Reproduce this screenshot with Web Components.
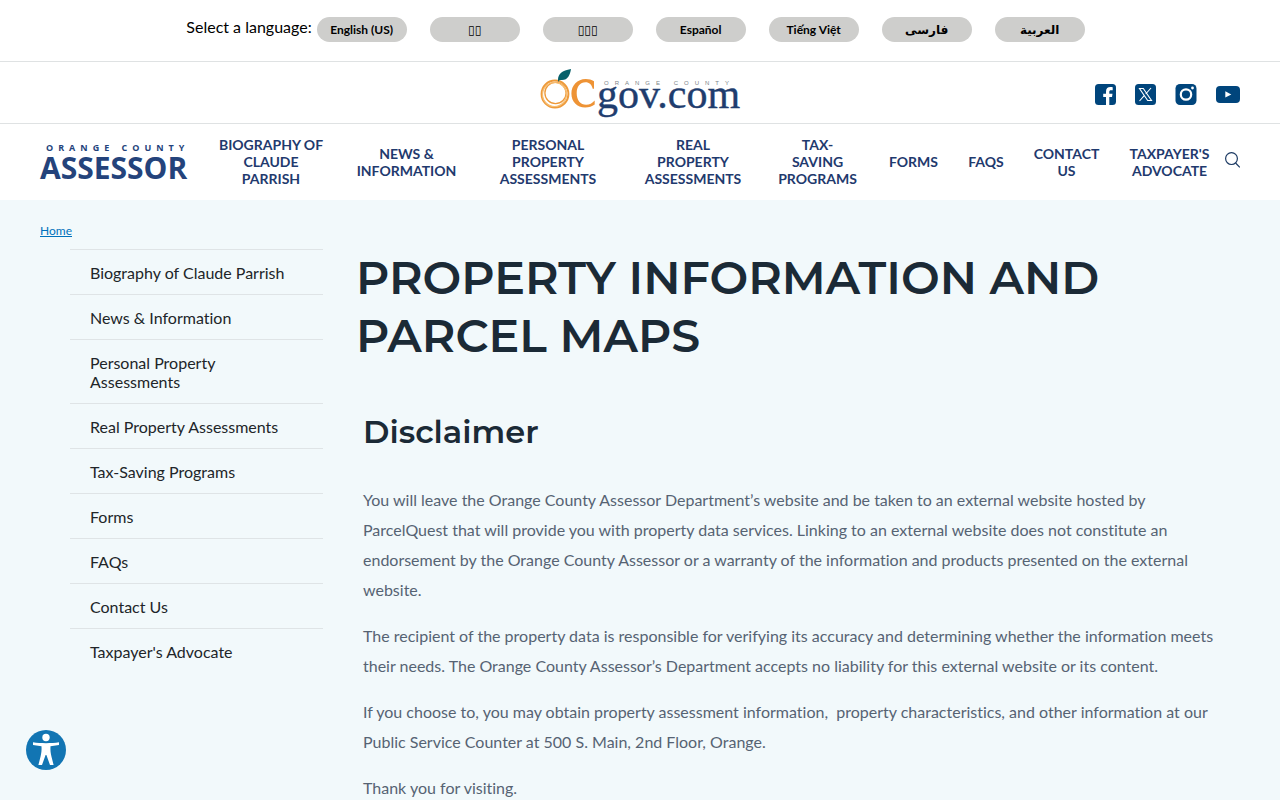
<!DOCTYPE html>
<html lang="en">
<head>
<meta charset="utf-8">
<meta name="viewport" content="width=device-width, initial-scale=1">
<title>Property Information and Parcel Maps</title>
<style>
    body {
        margin: 0;
        background: #f2f9fb;
        color: #212529;
        font-family: Lato, "Noto Sans", "DejaVu Sans", sans-serif;
        font-size: 16px;
        font-variant-ligatures: none;
    }
</style>
</head>
<body>
<oc-page>
    <language-bar slot="header" label="Select a language:">
        <language-button>English (US)</language-button>
        <language-button>▯▯</language-button>
        <language-button>▯▯▯</language-button>
        <language-button>Español</language-button>
        <language-button>Tiếng Việt</language-button>
        <language-button>فارسی</language-button>
        <language-button>العربية</language-button>
    </language-bar>
    <brand-bar slot="header"></brand-bar>
    <main-nav slot="header">
        <nav-item>Biography of Claude Parrish</nav-item>
        <nav-item>News &amp; Information</nav-item>
        <nav-item>Personal Property Assessments</nav-item>
        <nav-item>Real Property Assessments</nav-item>
        <nav-item>Tax-<br>Saving Programs</nav-item>
        <nav-item>Forms</nav-item>
        <nav-item>FAQs</nav-item>
        <nav-item>Contact Us</nav-item>
        <nav-item>Taxpayer's Advocate</nav-item>
    </main-nav>
    <bread-crumb slot="crumb">Home</bread-crumb>
    <side-menu slot="side">
        <side-item>Biography of Claude Parrish</side-item>
        <side-item>News &amp; Information</side-item>
        <side-item>Personal Property Assessments</side-item>
        <side-item>Real Property Assessments</side-item>
        <side-item>Tax-Saving Programs</side-item>
        <side-item>Forms</side-item>
        <side-item>FAQs</side-item>
        <side-item>Contact Us</side-item>
        <side-item>Taxpayer's Advocate</side-item>
    </side-menu>
    <page-article heading="PROPERTY INFORMATION AND PARCEL MAPS" subheading="Disclaimer">
        <p>You will leave the Orange County Assessor Department’s website and be taken to an external website hosted by ParcelQuest that will provide you with property data services. Linking to an external website does not constitute an endorsement by the Orange County Assessor or a warranty of the information and products presented on the external website.</p>
        <p>The recipient of the property data is responsible for verifying its accuracy and determining whether the information meets their needs. The Orange County Assessor’s Department accepts no liability for this external website or its content.</p>
        <p>If you choose to, you may obtain property assessment information,&nbsp; property characteristics, and other information at our Public Service Counter at 500 S. Main, 2nd Floor, Orange.</p>
        <p>Thank you for visiting.</p>
    </page-article>
</oc-page>
<access-button></access-button>

<script>
    class OcPage extends HTMLElement {
        constructor() {
            super()
            this.attachShadow({mode: "open"}).innerHTML = /* html */`
                <style>
                    :host { display: block; }
                    header { background: #fff; }
                    .content { padding: 22px 40px 0; }
                    .columns {
                        display: grid;
                        grid-template-columns: 253px 1fr;
                        gap: 33px;
                        padding: 9px 16px 0 30px;
                    }
                </style>
                <header><slot name="header"></slot></header>
                <div class="content">
                    <slot name="crumb"></slot>
                    <div class="columns">
                        <slot name="side"></slot>
                        <main><slot></slot></main>
                    </div>
                </div>
            `
        }
    }

    class LanguageBar extends HTMLElement {
        constructor() {
            super()
            const label = this.getAttribute("label")
            this.attachShadow({mode: "open"}).innerHTML = /* html */`
                <style>
                    :host {
                        display: flex;
                        justify-content: center;
                        align-items: flex-start;
                        box-sizing: border-box;
                        height: 62px;
                        padding: 17px 9px 0 0;
                        border-bottom: 1px solid #dfe2e3;
                        color: #000;
                    }
                    span { line-height: 20px; margin-right: 5px; }
                    div { display: flex; gap: 23px; }
                </style>
                <span>${label}</span>
                <div role="group" aria-label="${label}"><slot></slot></div>
            `
        }
    }

    class LanguageButton extends HTMLElement {
        constructor() {
            super()
            this.attachShadow({mode: "open"}).innerHTML = /* html */`
                <style>
                    :host { display: block; }
                    button {
                        width: 90px;
                        height: 25px;
                        padding: 0;
                        border: 0;
                        border-radius: 13px;
                        background: #cececc;
                        color: #000;
                        font: bold 12px Lato, "DejaVu Sans", sans-serif;
                        cursor: pointer;
                    }
                </style>
                <button type="button"><slot></slot></button>
            `
        }
    }

    class BrandBar extends HTMLElement {
        constructor() {
            super()
            this.attachShadow({mode: "open"}).innerHTML = /* html */`
                <style>
                    :host {
                        display: grid;
                        grid-template-columns: 1fr auto 1fr;
                        align-items: center;
                        box-sizing: border-box;
                        height: 62px;
                        padding: 0 40px;
                        border-bottom: 1px solid #dfe2e3;
                    }
                    .logo { grid-column: 2; }
                    a, svg { display: block; }
                    .logo svg { overflow: visible; }
                    nav {
                        display: flex;
                        justify-content: flex-end;
                        align-items: center;
                        gap: 19px;
                        padding-top: 4px;
                    }
                </style>
                <a class="logo" href="#" aria-label="OCgov.com">
                    <svg width="200" height="50" viewBox="0 0 200 50">
                        <g fill="none" stroke="#ee9a3a">
                            <circle cx="15" cy="26" r="13.4" stroke-width="2"/>
                            <circle cx="15.500" cy="25" r="10.600" stroke-width="1.300"/>
                            <circle cx="14.500" cy="26.500" r="12" stroke-width="1.200" stroke="#f6bd72"/>
                        </g>
                        <path d="M18 12c0-6 4-9.500 13-11-1 6-3 11-9 11-2 0-3 0-4 2z" fill="#07606a"/>
                        <path d="M54 15.500v5.200h-1.300c-1-4.300-3.400-6.500-7.200-6.500-5.400 0-8.800 4.200-8.800 11 0 7 3.800 11.500 9.400 11.500 3.400 0 6.200-1.600 8.600-4.300v4.100c-2.700 2-5.700 3-9.500 3-8.200 0-13.800-5.700-13.800-13.900S37.200 11 45.700 11c3.300 0 5.800.8 8.300 2.200z" fill="#ee9335"/>
                        <text x="64" y="17" fill="#7e8588" font-family="Liberation Sans, sans-serif" font-size="6" letter-spacing="6">ORANGE COUNTY</text>
                        <text x="57" y="40" fill="#1f3d6e" stroke="#1f3d6e" stroke-width=".4" font-family="Liberation Serif, serif" font-size="42">gov.com</text>
                    </svg>
                </a>
                <nav aria-label="Social media">
                    <a href="#" aria-label="Facebook">
                        <svg width="21" height="21" viewBox="0 0 21 21"><rect width="21" height="21" rx="3.500" fill="#00457c"/><path d="M11 21v-8H8.200v-3.300H11V7.400c0-2.900 1.800-4.400 4.300-4.400.9 0 1.900.1 2.400.2v3h-1.600c-1.400 0-1.800.7-1.800 1.600v1.900h3.200l-.5 3.300h-2.700v8z" fill="#fff"/></svg>
                    </a>
                    <a href="#" aria-label="X">
                        <svg width="21" height="21" viewBox="0 0 21 21"><rect width="21" height="21" rx="3.500" fill="#00457c"/><path d="M4.500 4.500h3.800l8.200 12h-3.800zM16 4l-5.300 6M9.400 11.300 4.500 17" fill="none" stroke="#fff" stroke-width="1.100"/></svg>
                    </a>
                    <a href="#" aria-label="Instagram">
                        <svg width="22" height="21" viewBox="0 0 22 21"><rect x=".5" width="21" height="21" rx="4.500" fill="#00457c"/><circle cx="11" cy="10.500" r="5.200" fill="none" stroke="#fff" stroke-width="2.200"/><circle cx="17.500" cy="4" r="1.400" fill="#fff"/></svg>
                    </a>
                    <a href="#" aria-label="YouTube">
                        <svg width="24" height="18" viewBox="0 0 24 18"><rect width="24" height="17" rx="4" fill="#00457c"/><path d="M9.300 5.200v6.400l6-3.200z" fill="#fff"/></svg>
                    </a>
                </nav>
            `
        }
    }

    class MainNav extends HTMLElement {
        constructor() {
            super()
            this.attachShadow({mode: "open"}).innerHTML = /* html */`
                <style>
                    :host {
                        display: flex;
                        align-items: center;
                        min-height: 75px;
                        padding: 0 40px 1px;
                    }
                    a, svg { display: block; }
                    .logo { margin-right: 10px; }
                    .logo svg { overflow: visible; }
                    nav {
                        flex: 1;
                        display: grid;
                        grid-template-columns: 142fr 129fr 154fr 136fr 113fr 79fr 66fr 95fr 111fr;
                        align-items: center;
                    }
                    button {
                        padding: 0 0 4px;
                        border: 0;
                        background: none;
                        cursor: pointer;
                    }
                </style>
                <a class="logo" href="#" aria-label="Orange County Assessor">
                    <svg width="150" height="40" viewBox="0 0 150 40">
                        <g fill="#24437b" font-family="Open Sans, sans-serif" font-weight="bold">
                            <text x="6" y="9" font-size="9" letter-spacing="5">ORANGE COUNTY</text>
                            <text x="0" y="37" font-size="30">ASSESSOR</text>
                        </g>
                    </svg>
                </a>
                <nav aria-label="Main"><slot></slot></nav>
                <button type="button" aria-label="Search">
                    <svg width="15" height="16" viewBox="0 0 15 16" fill="none" stroke="#1c3a63" stroke-width="1.200"><circle cx="6.500" cy="6.600" r="5.900"/><path d="m10.600 11 4.200 4.400"/></svg>
                </button>
            `
        }
    }

    class NavItem extends HTMLElement {
        constructor() {
            super()
            this.attachShadow({mode: "open"}).innerHTML = /* html */`
                <style>
                    :host { display: block; min-width: 0; }
                    a {
                        display: block;
                        padding: 0 14px;
                        color: #1f3a6e;
                        font-size: 14px;
                        font-weight: bold;
                        line-height: 17px;
                        text-align: center;
                        text-decoration: none;
                        text-transform: uppercase;
                    }
                </style>
                <a href="#"><slot></slot></a>
            `
        }
    }

    class BreadCrumb extends HTMLElement {
        constructor() {
            super()
            this.attachShadow({mode: "open"}).innerHTML = /* html */`
                <style>
                    :host { display: block; font-size: 12px; line-height: 18px; }
                    a { color: #0071bc; }
                </style>
                <a href="#"><slot></slot></a>
            `
        }
    }

    class SideMenu extends HTMLElement {
        constructor() {
            super()
            this.attachShadow({mode: "open"}).innerHTML = /* html */`
                <style>
                    :host { display: block; }
                </style>
                <nav aria-label="Section"><slot></slot></nav>
            `
        }
    }

    class SideItem extends HTMLElement {
        constructor() {
            super()
            this.attachShadow({mode: "open"}).innerHTML = /* html */`
                <style>
                    :host { display: block; border-top: 1px solid #dfe4e6; }
                    a {
                        display: block;
                        padding: 13px 20px 12px;
                        color: #212529;
                        line-height: 19px;
                        text-decoration: none;
                    }
                </style>
                <a href="#"><slot></slot></a>
            `
        }
    }

    class PageArticle extends HTMLElement {
        constructor() {
            super()
            const heading = this.getAttribute("heading")
            const subheading = this.getAttribute("subheading")
            this.attachShadow({mode: "open"}).innerHTML = /* html */`
                <style>
                    :host { display: block; }
                    h1, h2 {
                        margin: 0;
                        color: #1b2a36;
                        font-family: Montserrat, Inter, sans-serif;
                        font-weight: 600;
                    }
                    h1 { font-size: 46px; line-height: 58px; }
                    .body { padding: 47px 0 0 7px; }
                    h2 { font-size: 32px; line-height: 40px; margin-bottom: 33px; }
                    ::slotted(p) {
                        margin: 0 0 16px;
                        color: #566373;
                        line-height: 30px;
                    }
                </style>
                <h1>${heading}</h1>
                <div class="body">
                    <h2>${subheading}</h2>
                    <slot></slot>
                </div>
            `
        }
    }

    class AccessButton extends HTMLElement {
        constructor() {
            super()
            this.attachShadow({mode: "open"}).innerHTML = /* html */`
                <style>
                    :host { position: fixed; left: 26px; bottom: 30px; }
                    button { display: block; padding: 0; border: 0; background: none; cursor: pointer; }
                    svg { display: block; }
                </style>
                <button type="button" aria-label="Accessibility options">
                    <svg width="40" height="40" viewBox="0 0 40 40">
                        <circle cx="20" cy="20" r="20" fill="#1275b3"/>
                        <circle cx="20" cy="7.500" r="3.700" fill="#fff"/>
                        <path d="M7 12.300c4 .6 8 .9 13 .9s9-.3 13-.9v2.600l-8.500 1.300c-.3 4 .2 7 1 10.500l2.100 8.300h-3.600L20.400 25h-.8L16 35h-3.600l2.100-8.300c.8-3.500 1.300-6.500 1-10.500L7 14.900z" fill="#fff"/>
                    </svg>
                </button>
            `
        }
    }

    customElements.define("oc-page", OcPage)
    customElements.define("language-bar", LanguageBar)
    customElements.define("language-button", LanguageButton)
    customElements.define("brand-bar", BrandBar)
    customElements.define("main-nav", MainNav)
    customElements.define("nav-item", NavItem)
    customElements.define("bread-crumb", BreadCrumb)
    customElements.define("side-menu", SideMenu)
    customElements.define("side-item", SideItem)
    customElements.define("page-article", PageArticle)
    customElements.define("access-button", AccessButton)
</script>
</body>
</html>
